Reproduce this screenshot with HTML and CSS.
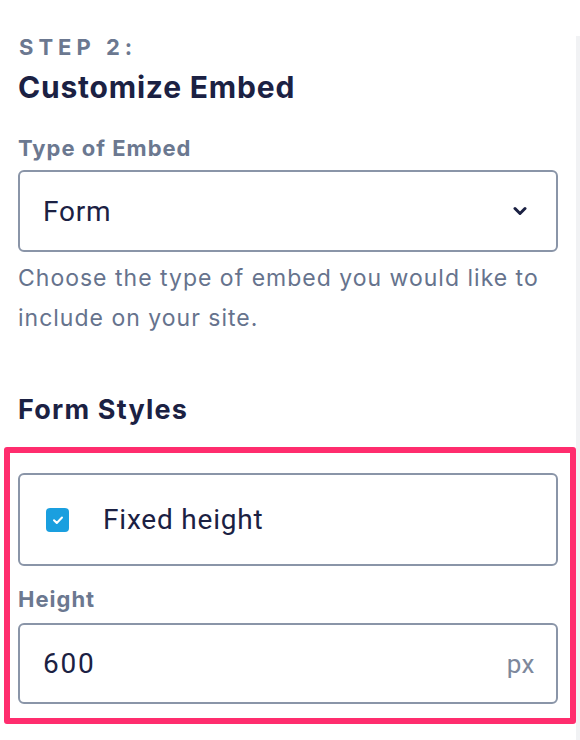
FILE: index.html
```html
<!DOCTYPE html>
<html>
<head>
<meta charset="utf-8">
<link rel="stylesheet" href="styles.css">
</head>
<body>
<div class="panel">
  <div class="step">STEP 2:</div>
  <h1 class="title">Customize Embed</h1>
  <div class="label">Type of Embed</div>
  <div class="select">
    <span class="value">Form</span>
    <svg class="chev" width="14" height="10" viewBox="0 0 14 10"><path d="M2 2.5 L7 7.5 L12 2.5" fill="none" stroke="#1b2143" stroke-width="3" stroke-linecap="round" stroke-linejoin="round"/></svg>
  </div>
  <p class="help">Choose the type of embed you would like to include on your site.</p>
  <h2 class="subtitle">Form Styles</h2>
  <div class="highlight">
    <div class="check-box">
      <span class="checkbox">
        <svg width="14" height="12" viewBox="0 0 14 12"><path d="M3 6.2 L5.8 9 L11 3.5" fill="none" stroke="#fff" stroke-width="2" stroke-linecap="round" stroke-linejoin="round"/></svg>
      </span>
      <span class="check-label">Fixed height</span>
    </div>
    <div class="label label-height">Height</div>
    <div class="input">
      <span class="value digits">600</span>
      <span class="unit">px</span>
    </div>
  </div>
</div>
</body>
</html>
```
FILE: styles.css
```css
html, body {
  margin: 0;
  padding: 0;
  background: #ffffff;
}
body {
  width: 580px;
  height: 740px;
  overflow: hidden;
}
.panel {
  box-sizing: border-box;
  width: 580px;
  height: 740px;
  border-right: 4px solid #f1f2f4;
  padding: 0 0 0 4px;
  font-family: Inter, "Noto Sans", sans-serif;
}
.step {
  margin: 36px 0 0 15px;
  font-size: 22px;
  font-weight: 700;
  letter-spacing: 5px;
  color: #6b7890;
  line-height: 23px;
}
.title {
  margin: 11px 0 0 14px;
  font-size: 30px;
  font-weight: 700;
  letter-spacing: 0.8px;
  color: #1b2143;
  line-height: 34px;
}
.label {
  margin: 32px 0 0 14px;
  font-size: 22px;
  font-weight: 700;
  letter-spacing: 1px;
  color: #6b7890;
  line-height: 24px;
}
.select, .input, .check-box {
  box-sizing: border-box;
  width: 540px;
  margin-left: 14px;
  border: 2px solid #8a95a8;
  border-radius: 6px;
  display: flex;
  align-items: center;
  font-family: Roboto, sans-serif;
  font-size: 28px;
  letter-spacing: 0.8px;
  color: #1b2143;
}
.select {
  margin-top: 10px;
  height: 82px;
  padding: 0 29px 0 23px;
  justify-content: space-between;
}
.chev {
  display: block;
}
.help {
  margin: 6px 0 0 14px;
  font-size: 23px;
  letter-spacing: 1px;
  line-height: 40px;
  color: #66738d;
  width: 540px;
}
.subtitle {
  margin: 57px 0 0 14px;
  font-size: 27px;
  font-weight: 700;
  letter-spacing: 1.2px;
  color: #1b2143;
  line-height: 30px;
}
.highlight {
  box-sizing: border-box;
  width: 572px;
  margin-top: 22px;
  border: 6px solid #ff2d6e;
  border-radius: 3px;
  padding: 20px 0 14px 8px;
}
.highlight .check-box,
.highlight .input,
.highlight .label {
  margin-left: 0;
}
.check-box {
  height: 93px;
  padding-left: 26px;
}
.checkbox {
  width: 23px;
  height: 24px;
  border-radius: 4px;
  background: #1a9fdf;
  display: flex;
  align-items: center;
  justify-content: center;
}
.check-label {
  margin-left: 34px;
}
.highlight .label-height {
  margin-top: 21px;
}
.input {
  margin-top: 12px;
  height: 81px;
  padding: 0 21px 0 23px;
  justify-content: space-between;
}
.digits {
  letter-spacing: 1.8px;
}
.unit {
  font-size: 26px;
  letter-spacing: 0.5px;
  color: #7d889c;
}
```
